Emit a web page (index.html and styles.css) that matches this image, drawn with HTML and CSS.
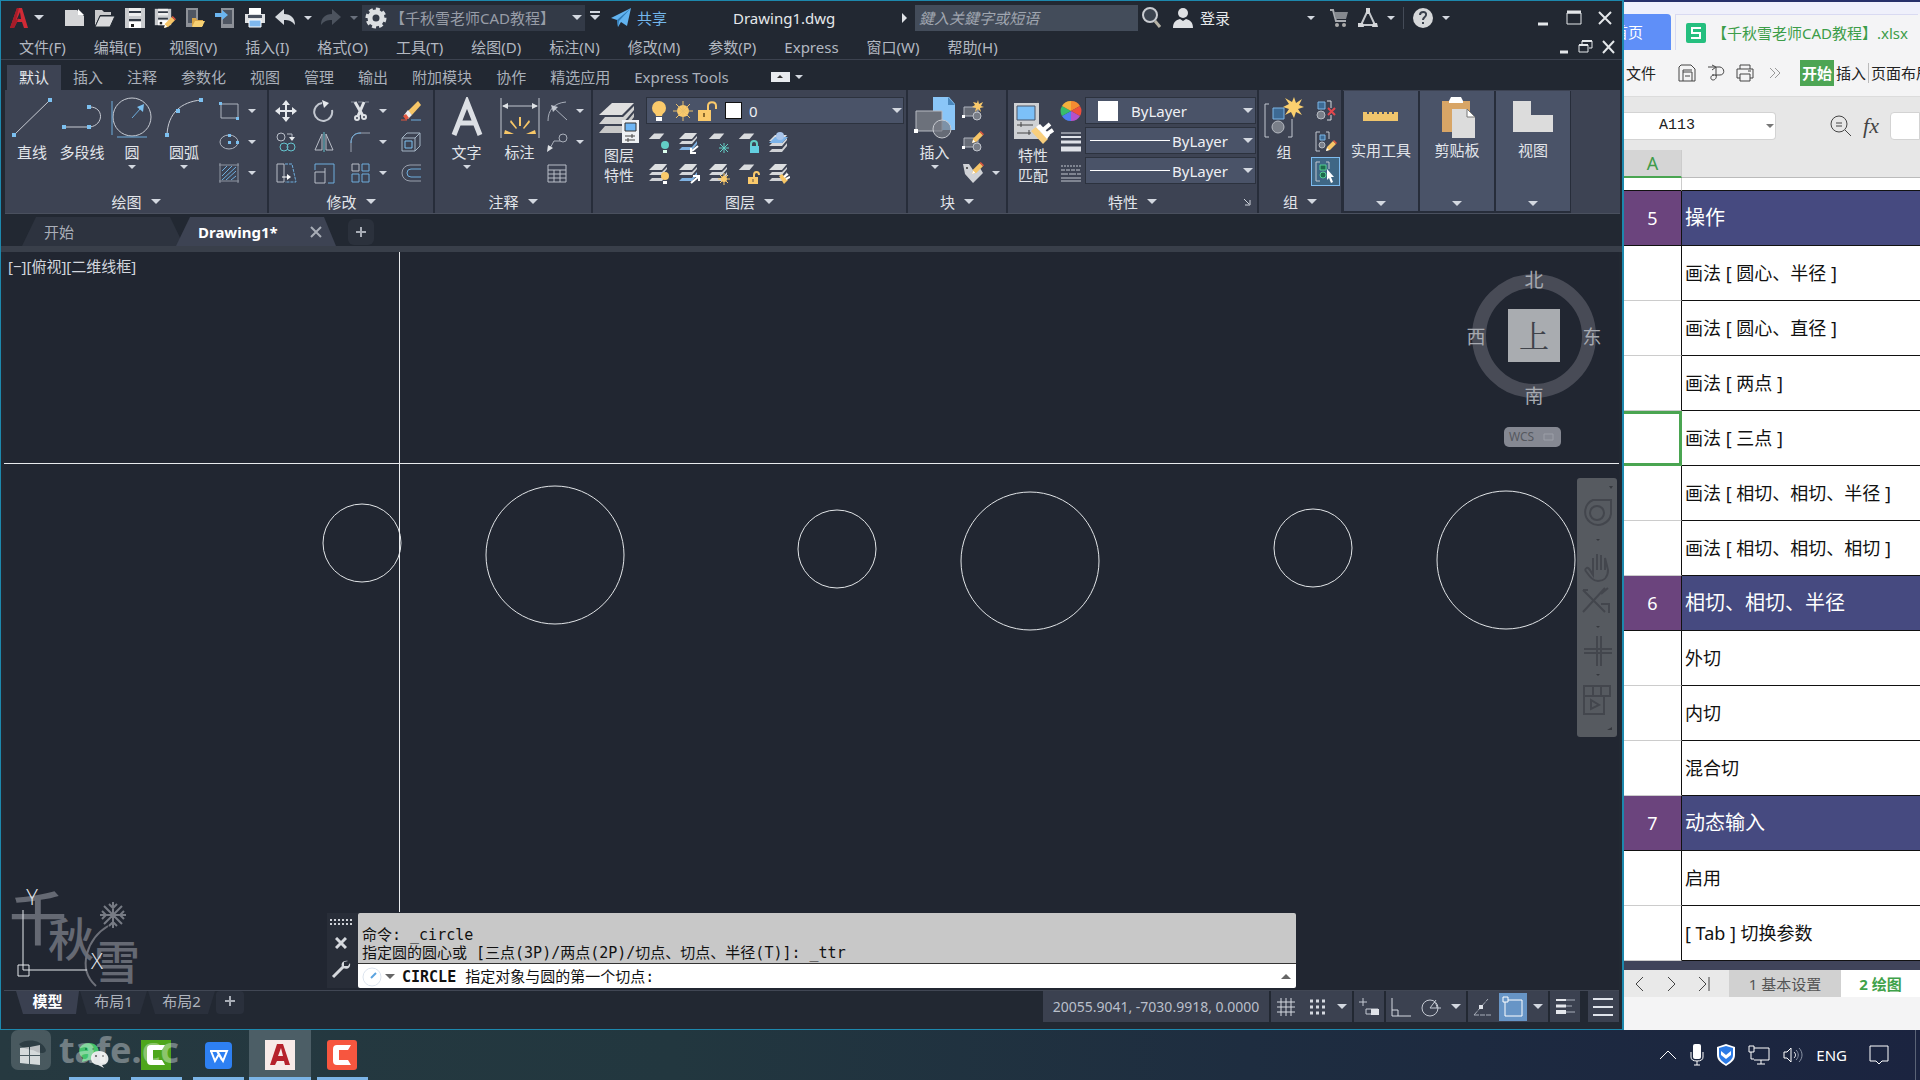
FILE: index.html
```html
<!DOCTYPE html>
<html lang="zh-CN">
<head>
<meta charset="utf-8">
<meta name="viewport" content="width=device-width, initial-scale=1">
<title>Drawing1.dwg</title>
<link rel="stylesheet" href="styles.css">
</head>
<body>
<svg class="defs" aria-hidden="true">
  <symbol id="sheet" viewBox="0 0 22 22"><path d="M8 2h13l-6 7H1z" fill="#d9dbde"/></symbol>
  <symbol id="sheets" viewBox="0 0 22 22"><path d="M7 1h12l-5 6H1z" fill="#dcdee0"/><path d="M1 12l3-3h10l5-5v2l-5 6z" fill="#d5d7da"/><path d="M1 18l3-3h10l5-6v3l-5 6z" fill="#cfd1d5"/></symbol>
  <symbol id="sheetsblue" viewBox="0 0 22 22"><path d="M7 1h12l-5 6H1z" fill="#dcdee0"/><path d="M1 12l3-3h10l5-5v2l-5 6z" fill="#d5d7da"/><path d="M1 18l3-3h10l5-6v3l-5 6z" fill="#7fb2e2"/></symbol>
  <symbol id="paper" viewBox="0 0 22 22"><path d="M1 3h12l7 6v10H1z" fill="#d5d6d8"/><path d="M14 2l6 6h-6z" fill="#fff"/></symbol>
  <symbol id="floppy" viewBox="0 0 22 22"><path d="M1 1h20v20H1z" fill="#c9cbce"/><path d="M5 1h12v8H5z" fill="#efefef"/><path d="M5 5h12M5 13h12" stroke="#333a45" stroke-width="2"/><path d="M5 15h12v6H5z" fill="#fff"/><path d="M7 17h3v3H7z" fill="#222"/></symbol>
  <symbol id="block" viewBox="0 0 22 22"><path d="M2 7h14v9H2z" fill="#666b76" stroke="#aeb3bd"/><circle cx="15" cy="16" r="4" fill="#777c86" stroke="#c0c4cc"/><path d="M0 15h3v3H0z" fill="#fff"/></symbol>
  <symbol id="pencil" viewBox="0 0 12 12"><path d="M1 11l1-4 6-6 3 3-6 6z" fill="#f7c667"/><path d="M8 1l1-1 3 3-1 1z" fill="#e4573f"/><path d="M1 11l1-3 2 2z" fill="#fff"/></symbol>
</svg>
<div class="desktop">
<main class="cad">
  <header class="titlebar">
    <button class="ico logo" aria-label="应用程序"><svg width="20" height="22" viewBox="0 0 20 22"><path d="M1 21L8 1h5l6 20h-4l-2-6H8l-3 6zM8 12h4l-1-7z" fill="#d02a35"/><path d="M1 21L8 1h2L7 13l3-2-5 10z" fill="#a51c29"/></svg></button>
    <i class="caret wide"></i>
    <div class="quick">
      <button class="ico" aria-label="新建"><svg width="22" height="22"><use href="#paper"/></svg></button>
      <button class="ico" aria-label="打开"><svg width="22" height="22" viewBox="0 0 22 22"><path d="M1 19V3h7l2 2h7v3H6z" fill="#c9cacc"/><path d="M6 9h15l-5 11H1z" fill="#d9dadc" stroke="#222a33"/></svg></button>
      <button class="ico" aria-label="保存"><svg width="22" height="22"><use href="#floppy"/></svg></button>
      <button class="ico" aria-label="另存为"><svg width="22" height="22"><use href="#floppy" width="18" height="20"/><use href="#pencil" x="9" y="9" width="13" height="13"/></svg></button>
      <button class="ico" aria-label="从移动端打开"><svg width="22" height="22" viewBox="0 0 22 22"><path d="M2 1h12v19H2z" fill="#8d9198"/><path d="M4 3h8v13H4z" fill="#4f5662"/><path d="M8 19v-8h4l1 2h6v6z" fill="#d9a648"/><path d="M11 14h10l-3 6H8z" fill="#f7d173"/></svg></button>
      <button class="ico" aria-label="保存到移动端"><svg width="22" height="22" viewBox="0 0 22 22"><path d="M7 1h13v20H7z" fill="#8d9198"/><path d="M9 3h9v14H9z" fill="#4f5662"/><path d="M1 6h7V3l6 5-6 5v-3H1z" fill="#6bb5f0"/></svg></button>
      <button class="ico" aria-label="打印"><svg width="22" height="22" viewBox="0 0 22 22"><path d="M5 1h12v6H5z" fill="#fff"/><path d="M1 7h20v9H1z" fill="#dfe1e3"/><path d="M4 8h14v3H4z" fill="#49515e"/><path d="M5 13h12v7H5z" fill="#7fb8ee" stroke="#fff"/></svg></button>
      <button class="ico" aria-label="放弃"><svg width="22" height="22" viewBox="0 0 22 22"><path d="M1 10l9-8v5c7 0 11 4 11 11-3-4-6-5-11-5v5z" fill="#d6dadf"/></svg></button>
      <i class="caret"></i>
      <button class="ico" aria-label="重做"><svg width="22" height="22" viewBox="0 0 22 22"><path d="M21 10l-9-8v5C5 7 1 11 1 18c3-4 6-5 11-5v5z" fill="#4c535e"/></svg></button>
      <i class="caret dim"></i>
    </div>
    <label class="workspace">
      <svg width="22" height="22" viewBox="0 0 22 22"><circle cx="11" cy="11" r="6" fill="none" stroke="#dcdfe2" stroke-width="5"/><circle cx="11" cy="11" r="9" fill="none" stroke="#dcdfe2" stroke-width="3" stroke-dasharray="4 3"/></svg>
      <select aria-label="工作空间"><option>【千秋雪老师CAD教程】</option></select>
      <i class="caret wide"></i>
    </label>
    <i class="caret wide bar"></i>
    <button class="share"><svg width="22" height="22" viewBox="0 0 22 22"><path d="M1 11L21 1l-4 18-6-4-3 5-1-7z" fill="#62b3ef"/><path d="M7 13L21 1 9 14l-1 6z" fill="#2e79b5"/></svg>共享</button>
    <h1>Drawing1.dwg</h1>
    <i class="play"></i>
    <input class="search" type="text" aria-label="搜索" placeholder="鍵入关鍵字或短语">
    <button class="ico" aria-label="查找"><svg width="20" height="22" viewBox="0 0 20 22"><circle cx="8" cy="8" r="7" fill="#3b434f" stroke="#c9ccd1" stroke-width="2"/><path d="M13 14l5 6" stroke="#b7b3a6" stroke-width="3"/></svg></button>
    <button class="login"><svg width="22" height="22" viewBox="0 0 22 22"><circle cx="11" cy="6" r="5" fill="#dfe1e4"/><path d="M1 21c0-6 3-8 7-9l3 2 3-2c4 1 7 3 7 9z" fill="#dfe1e4"/></svg>登录</button>
    <div class="apps">
      <i class="caret first"></i>
      <button class="ico" aria-label="应用商店"><svg width="20" height="20" viewBox="0 0 20 20"><path d="M1 2h3l3 11h10" fill="none" stroke="#a9acb1" stroke-width="2"/><path d="M5 4h14l-2 7H7z" fill="#85898f"/><circle cx="8" cy="17" r="2" fill="#aaa"/><circle cx="15" cy="17" r="2" fill="#aaa"/></svg></button>
      <button class="ico" aria-label="Autodesk"><svg width="22" height="22" viewBox="0 0 22 22"><path d="M11 3L4 18h14z" fill="none" stroke="#c5c8cc" stroke-width="2"/><path d="M9 1h4v5l-1 1h-2L9 6zM1 16h5l1 4H1zM16 16h4l1 4h-6z" fill="#d5d7da"/></svg></button>
      <i class="caret"></i>
      <span class="rule"></span>
      <button class="ico" aria-label="帮助"><svg width="22" height="22" viewBox="0 0 22 22"><circle cx="11" cy="11" r="10" fill="#d6d8da"/><path d="M8 8c0-4 7-4 6 0 0 2-3 2-3 5M11 15v2" fill="none" stroke="#39404c" stroke-width="2"/></svg></button>
      <i class="caret"></i>
    </div>
    <div class="winbtns">
      <button aria-label="最小化"><svg width="14" height="16" viewBox="0 0 14 16"><path d="M2 14h10" stroke="#e4e7ea" stroke-width="3"/></svg></button>
      <button aria-label="最大化"><svg width="16" height="16" viewBox="0 0 16 16"><path d="M1 3h14v11H1z" fill="none" stroke="#e4e7ea"/><path d="M1 2h14" stroke="#e4e7ea" stroke-width="3"/></svg></button>
      <button aria-label="关闭"><svg width="14" height="16" viewBox="0 0 14 16"><path d="M1 2l12 12M13 2L1 14" stroke="#e4e7ea" stroke-width="2"/></svg></button>
    </div>
  </header>
  <nav class="menubar">
    <button>文件(F)</button><button>编辑(E)</button><button>视图(V)</button><button>插入(I)</button><button>格式(O)</button><button>工具(T)</button><button>绘图(D)</button><button>标注(N)</button><button>修改(M)</button><button>参数(P)</button><button>Express</button><button>窗口(W)</button><button>帮助(H)</button>
    <div class="docbtns">
      <button aria-label="最小化图形"><svg width="10" height="14" viewBox="0 0 10 14"><path d="M1 12h8" stroke="#e4e7ea" stroke-width="3"/></svg></button>
      <button aria-label="还原图形"><svg width="15" height="15" viewBox="0 0 15 15"><path d="M4 5V2h10v7h-3M1 6h9v7H1z" fill="none" stroke="#e4e7ea"/><path d="M4 2h10M1 6h9" stroke="#e4e7ea" stroke-width="2"/></svg></button>
      <button aria-label="关闭图形"><svg width="13" height="14" viewBox="0 0 13 14"><path d="M1 1l11 12M12 1L1 13" stroke="#e4e7ea" stroke-width="2"/></svg></button>
    </div>
  </nav>
  <nav class="ribtabs">
    <button class="on">默认</button><button>插入</button><button>注释</button><button>参数化</button><button>视图</button><button>管理</button><button>输出</button><button>附加模块</button><button>协作</button><button>精选应用</button><button>Express Tools</button>
    <button class="collapse" aria-label="最小化功能区"><svg width="19" height="10" viewBox="0 0 19 10"><path d="M0 0h19v10H0z" fill="#e8ebef"/><path d="M6 6l3-3 3 3z" fill="#333"/></svg><i class="caret"></i></button>
  </nav>
  <section class="ribbon">
    <div class="panel p-draw">
      <div class="body">
        <button class="big"><svg width="42" height="42" viewBox="0 0 42 42"><path d="M3 38L39 3" stroke="#c8ccd4"/><path d="M1 36h4v4H1zM37 1h4v4h-4z" fill="#7cc0f0"/></svg>直线</button>
        <button class="big"><svg width="42" height="42" viewBox="0 0 42 42"><path d="M3 30h26c14-2 14-20 0-20" fill="none" stroke="#c8ccd4"/><path d="M1 28h4v4H1zM26 28h4v4h-4zM26 8h4v4h-4z" fill="#7cc0f0"/></svg>多段线</button>
        <button class="big"><svg width="42" height="42" viewBox="0 0 42 42"><circle cx="21" cy="20" r="19" fill="none" stroke="#c8ccd4"/><path d="M1 4v34M6 40h30M21 21l9-10" stroke="#6eaede"/><path d="M33 7l-1 8-6-5z" fill="#7cc0f0"/></svg>圆<i class="caret"></i></button>
        <button class="big arc"><svg width="42" height="42" viewBox="0 0 42 42"><path d="M4 38C5 16 18 5 38 3" fill="none" stroke="#c8ccd4"/><path d="M2 36h4v4H2zM13 12h4v4h-4zM36 1h4v4h-4z" fill="#7cc0f0"/></svg>圆弧<i class="caret"></i></button>
        <div class="col">
          <button class="sm" aria-label="矩形"><svg width="22" height="22" viewBox="0 0 22 22"><path d="M3 4h17v14H3z" fill="none" stroke="#aeb4bf"/><path d="M1 2h3v3H1zM18 17h3v3h-3z" fill="#7cc0f0"/></svg><i class="caret"></i></button>
          <button class="sm" aria-label="椭圆"><svg width="22" height="22" viewBox="0 0 22 22"><ellipse cx="11" cy="11" rx="9" ry="7" fill="none" stroke="#aeb4bf"/><path d="M10 3h3v3h-3zM10 10h3v3h-3zM18 10h3v3h-3z" fill="#7cc0f0"/></svg><i class="caret"></i></button>
          <button class="sm" aria-label="图案填充"><svg width="22" height="22" viewBox="0 0 22 22"><path d="M2 1v20M20 1v20M1 3h20M1 19h20" stroke="#8f96a3"/><path d="M4 9l5-5M4 14L14 4M4 18L18 5M8 18l10-9M13 18l5-4" stroke="#6eaede"/></svg><i class="caret"></i></button>
        </div>
      </div>
      <button class="title">绘图<i class="caret wide"></i></button>
    </div>
    <div class="panel p-modify">
      <div class="body">
        <button class="sm" aria-label="移动"><svg width="22" height="22" viewBox="0 0 22 22"><path d="M11 3v16M3 11h16" stroke="#e6e9ed" stroke-width="2"/><path d="M7 5l4-5 4 5zM7 17l4 5 4-5zM5 7l-5 4 5 4zM17 7l5 4-5 4z" fill="#e6e9ed"/></svg></button>
        <button class="sm" aria-label="旋转"><svg width="22" height="22" viewBox="0 0 22 22"><path d="M9 3a9 9 0 1 0 10 7" fill="none" stroke="#c2c7d0" stroke-width="2"/><path d="M9 0l7 3-5 5z" fill="#e6e9ed"/></svg></button>
        <button class="sm" aria-label="修剪"><svg width="22" height="22" viewBox="0 0 22 22"><path d="M2 2h18" stroke="#858c99" stroke-dasharray="4 3"/><path d="M6 2l8 14M15 2L9 16" stroke="#dfe2e6" stroke-width="3"/><circle cx="8" cy="18" r="2" fill="none" stroke="#dfe2e6" stroke-width="2"/><circle cx="15" cy="17" r="2" fill="none" stroke="#dfe2e6" stroke-width="2"/></svg><i class="caret"></i></button>
        <button class="sm" aria-label="删除"><svg width="22" height="22" viewBox="0 0 22 22"><path d="M8 11L18 1l3 4-9 10z" fill="#f7c667"/><path d="M4 15l4-5 4 5-4 4z" fill="#f1efed"/><path d="M3 16l3-2 3 4-3 2z" fill="#e4573f"/><path d="M1 20h6" stroke="#e4573f"/><path d="M11 20h10" stroke="#6eaede"/></svg></button>
        <button class="sm" aria-label="复制"><svg width="22" height="22" viewBox="0 0 22 22"><g fill="none" stroke="#b9bec8"><circle cx="6" cy="6" r="4"/><path d="M12 3h5v5"/></g><path d="M14 6l3 4 3-4z" fill="#e6e9ed"/><g fill="none" stroke="#65c4cf"><circle cx="9" cy="16" r="4"/><circle cx="16" cy="16" r="4"/></g></svg></button>
        <button class="sm" aria-label="镜像"><svg width="22" height="22" viewBox="0 0 22 22"><path d="M9 3v16H2zM13 3v16h7z" fill="none" stroke="#b9bec8"/><path d="M11 1v20" stroke="#65c4cf"/></svg></button>
        <button class="sm" aria-label="圆角"><svg width="22" height="22" viewBox="0 0 22 22"><path d="M2 21V12C2 5 6 2 11 2h10" fill="none" stroke="#9aa1ae"/><path d="M2 12C2 5 6 2 12 2" fill="none" stroke="#6eaede"/></svg><i class="caret"></i></button>
        <button class="sm" aria-label="分解"><svg width="22" height="22" viewBox="0 0 22 22"><path d="M2 7l5-5h13v13l-5 5H2zM2 7h13v13M15 7l5-5" fill="none" stroke="#a4b4c4"/><path d="M5 10h7v7H5z" fill="none" stroke="#7cc0f0"/></svg></button>
        <button class="sm" aria-label="拉伸"><svg width="22" height="22" viewBox="0 0 22 22"><path d="M2 2h7v18H2z" fill="none" stroke="#b9bec8"/><path d="M10 2h7l4 18H10" fill="none" stroke="#6eaede" stroke-dasharray="3 1"/><path d="M7 15h6" stroke="#fff"/><path d="M12 12l4 3-4 3z" fill="#fff"/></svg></button>
        <button class="sm" aria-label="缩放"><svg width="22" height="22" viewBox="0 0 22 22"><path d="M2 8V2h19v19h-6" fill="none" stroke="#6eaede"/><path d="M2 10h10v11H2zM12 10V6" fill="none" stroke="#b9bec8"/></svg></button>
        <button class="sm" aria-label="阵列"><svg width="22" height="22" viewBox="0 0 22 22"><g fill="none" stroke="#6eaede"><path d="M3 12h7v8H3zM13 12h7v8h-7zM13 2h7v7h-7z"/></g><path d="M3 2h7v7H3z" fill="none" stroke="#b9bec8"/></svg><i class="caret"></i></button>
        <button class="sm" aria-label="偏移"><svg width="22" height="22" viewBox="0 0 22 22"><path d="M21 3H10a8 8 0 0 0 0 16h11" fill="none" stroke="#9aa1ae"/><path d="M21 7H11a4 4 0 0 0 0 8h10" fill="none" stroke="#6eaede"/></svg></button>
      </div>
      <button class="title">修改<i class="caret wide"></i></button>
    </div>
    <div class="panel p-note">
      <div class="body">
        <button class="big"><svg width="42" height="42" viewBox="0 0 42 42"><path d="M8 38L21 5l13 33M13 26h16" fill="none" stroke="#dcdfe4" stroke-width="5"/></svg>文字<i class="caret"></i></button>
        <button class="big"><svg width="42" height="42" viewBox="0 0 42 42"><path d="M2 1v40M40 1v40M4 9h34" stroke="#c2c7d0"/><path d="M3 9l6-3v6zM39 9l-6-3v6z" fill="#dfe2e6"/><path d="M20 20h2v9h-2zM12 23l6 8-1 1-6-7zM30 23l-6 8 1 1 6-7zM6 33l9 4H5zM36 33l-9 4h10z" fill="#f7c667"/></svg>标注</button>
        <div class="col">
          <button class="sm" aria-label="半径标注"><svg width="22" height="22" viewBox="0 0 22 22"><path d="M2 21C2 10 8 3 20 2M7 7l14 13" fill="none" stroke="#a9afba"/><path d="M5 5l7 2-5 5z" fill="#c2c7d0"/></svg><i class="caret"></i></button>
          <button class="sm" aria-label="引线"><svg width="22" height="22" viewBox="0 0 22 22"><path d="M3 19l5-9h6" fill="none" stroke="#a9afba"/><circle cx="17" cy="7" r="4" fill="none" stroke="#a9afba"/><path d="M1 21l1-7 5 3z" fill="#dfe2e6"/></svg><i class="caret"></i></button>
          <button class="sm" aria-label="表格"><svg width="22" height="22" viewBox="0 0 22 22"><path d="M2 3h18v17H2zM2 8h18M2 12h18M2 16h18M8 8v12M14 8v12" fill="none" stroke="#b9bec8"/></svg></button>
        </div>
      </div>
      <button class="title">注释<i class="caret wide"></i></button>
    </div>
    <div class="panel p-layer">
      <div class="body">
        <button class="big two"><svg width="42" height="42" viewBox="0 0 42 42"><path d="M14 1h22L24 13H1z" fill="#e0e0e0"/><path d="M1 22l6-7h18L36 4v4L24 22z" fill="#d2d2d2"/><path d="M1 31l6-7h18l11-13v4L24 31z" fill="#c8c8c8"/><path d="M24 18h17v23H24z" fill="#eef1f4"/><path d="M27 21h11v8H27z" fill="#6eb6f4" stroke="#333" stroke-width="1"/><path d="M27 34h10M27 38h10M34 32v4M30 36v4" stroke="#444"/></svg>图层<br>特性</button>
        <div class="stack">
          <label class="combo">
            <svg width="22" height="22" viewBox="0 0 22 22"><circle cx="11" cy="8" r="7" fill="#fbca6b"/><path d="M7 13h8l-1 3H8z" fill="#fbca6b"/><path d="M8 17h6v4H8z" fill="#fff"/></svg>
            <svg width="22" height="22" viewBox="0 0 22 22"><circle cx="11" cy="11" r="6" fill="#fbca6b"/><path d="M11 1v20M1 11h20M4 4l14 14M18 4L4 18" stroke="#e9c06d"/></svg>
            <svg width="22" height="22" viewBox="0 0 22 22"><path d="M2 10h13v11H2z" fill="#fbca6b"/><path d="M12 10V6c0-5 8-5 8 0v3" fill="none" stroke="#fbca6b" stroke-width="2"/><path d="M8 13v4" stroke="#8a6a2e" stroke-width="2"/></svg>
            <span class="swatch"></span>
            <select aria-label="图层"><option>0</option></select><i class="caret wide"></i>
          </label>
          <div class="tools">
            <button class="sm" aria-label="关"><svg width="22" height="22"><use href="#sheet" width="17" height="17"/><circle cx="17" cy="13" r="4" fill="#63cfc6"/><path d="M15 18h4v3h-4z" fill="#dfe"/></svg></button>
            <button class="sm" aria-label="隔离"><svg width="22" height="22"><use href="#sheetsblue"/><path d="M20 14l-6 5M13 16v5h5" stroke="#fff" stroke-width="2" fill="none"/></svg></button>
            <button class="sm" aria-label="冻结"><svg width="22" height="22"><use href="#sheet" width="17" height="17"/><path d="M16 11v10M11 16h10M12 12l8 8M20 12l-8 8" stroke="#63cfc6"/></svg></button>
            <button class="sm" aria-label="锁定"><svg width="22" height="22"><use href="#sheet" width="17" height="17"/><path d="M13 14v-2c0-4 6-4 6 0v2" fill="none" stroke="#63cfc6" stroke-width="2"/><path d="M12 14h9v7h-9z" fill="#63cfe0"/></svg></button>
            <button class="sm" aria-label="置为当前"><svg width="22" height="22"><use href="#sheets" y="2"/><path d="M1 11l6-6h13l-6 6z" fill="#7db4ea"/><circle cx="12" cy="4" r="4" fill="#a9c5ea"/></svg></button>
            <button class="sm" aria-label="打开所有图层"><svg width="22" height="22"><use href="#sheets"/><circle cx="17" cy="13" r="4" fill="#fbca6b"/><path d="M15 18h4v3h-4z" fill="#fff"/></svg></button>
            <button class="sm" aria-label="取消隔离"><svg width="22" height="22"><use href="#sheetsblue"/><path d="M13 20l7-6M15 13h6v5" stroke="#fff" stroke-width="2" fill="none"/></svg></button>
            <button class="sm" aria-label="解冻"><svg width="22" height="22"><use href="#sheets"/><circle cx="16" cy="16" r="3" fill="#fbca6b"/><path d="M16 10v12M10 16h12M12 12l8 8M20 12l-8 8" stroke="#fbca6b"/></svg></button>
            <button class="sm" aria-label="解锁"><svg width="22" height="22"><use href="#sheet" width="17" height="17"/><path d="M16 14v-2c0-4 5-4 5 0" fill="none" stroke="#fbca6b" stroke-width="2"/><path d="M10 14h10v7H10z" fill="#fbca6b"/><path d="M15 16v3" stroke="#654"/></svg></button>
            <button class="sm" aria-label="匹配图层"><svg width="22" height="22"><use href="#sheets"/><path d="M11 13l3-2 6 6-4 4z" fill="#f7c667"/><path d="M16 14l4-3M18 16l4-2" stroke="#fff" stroke-width="2"/></svg></button>
          </div>
        </div>
      </div>
      <button class="title">图层<i class="caret wide"></i></button>
    </div>
    <div class="panel p-block">
      <div class="body">
        <button class="big"><svg width="42" height="42" viewBox="0 0 42 42"><path d="M19 0h16l6 7v26H19z" fill="#8ac6f8"/><path d="M34 0l7 8h-7z" fill="#4a88bd"/><path d="M2 14h26v20H2z" fill="#6c717b" stroke="#b6bac2"/><circle cx="28" cy="32" r="9" fill="#777c86" fill-opacity=".7" stroke="#c6c9cf"/><path d="M0 32h4v4H0z" fill="#fff"/></svg>插入<i class="caret"></i></button>
        <div class="col">
          <button class="sm" aria-label="创建块"><svg width="22" height="22"><use href="#block"/><path d="M16 0l1 4 4-2-2 4 3 1-4 1 1 4-3-3-3 3 1-4-4-1 3-2-2-3 4 1z" fill="#fbca6b"/></svg></button>
          <button class="sm" aria-label="编辑块"><svg width="22" height="22"><use href="#block"/><use href="#pencil" x="9" y="0" width="13" height="13"/></svg></button>
          <button class="sm" aria-label="编辑属性"><svg width="22" height="22"><path d="M1 2h6l4 6 7-2 3 5-10 10L3 12z" fill="#d0d2d6"/><circle cx="5" cy="6" r="1" fill="#333"/><use href="#pencil" x="9" y="0" width="13" height="13"/></svg><i class="caret"></i></button>
        </div>
      </div>
      <button class="title">块<i class="caret wide"></i></button>
    </div>
    <div class="panel p-prop">
      <div class="body">
        <button class="big two"><svg width="42" height="42" viewBox="0 0 42 42"><path d="M2 1h25v36H2z" fill="#cfd1d4"/><path d="M5 4h18v14H5z" fill="#7cc0f8" stroke="#4a5566"/><path d="M5 23h16M5 31h14M9 20v5M17 28v5" stroke="#444"/><path d="M19 29l5-4 12 12-5 5z" fill="#f9cf7d"/><path d="M24 25l4-3 10 11-3 4z" fill="#fff"/><path d="M31 28l7-6M35 32l6-4" stroke="#fff" stroke-width="4"/></svg>特性<br>匹配</button>
        <div class="col">
          <button class="sm wheel" aria-label="对象颜色"><svg width="22" height="22" viewBox="0 0 22 22"><g transform="translate(11 11)"><path d="M0 0V-10A10 10 0 0 1 9-5z" fill="#f58b31"/><path d="M0 0L9-5A10 10 0 0 1 9 5z" fill="#ef4f3d"/><path d="M0 0L9 5A10 10 0 0 1 0 10z" fill="#b451c9"/><path d="M0 0V10A10 10 0 0 1-9 5z" fill="#4d7ff0"/><path d="M0 0L-9 5A10 10 0 0 1-9-5z" fill="#38bd6b"/><path d="M0 0L-9-5A10 10 0 0 1 0-10z" fill="#f4b13d"/></g></svg></button>
          <button class="sm" aria-label="线宽"><svg width="22" height="22" viewBox="0 0 22 22"><path d="M1 2h20" stroke="#dfe2e8"/><path d="M1 6h20" stroke="#dfe2e8" stroke-width="2"/><path d="M1 11h20" stroke="#dfe2e8" stroke-width="3"/><path d="M1 18h20" stroke="#dfe2e8" stroke-width="5"/></svg></button>
          <button class="sm" aria-label="线型"><svg width="22" height="22" viewBox="0 0 22 22"><path d="M1 4h20" stroke="#c2c7d0" stroke-dasharray="2 1"/><path d="M1 8h20" stroke="#c2c7d0" stroke-dasharray="4 1"/><path d="M1 12h20" stroke="#c2c7d0" stroke-dasharray="7 1"/><path d="M1 16h20M1 19h20" stroke="#c2c7d0"/></svg></button>
        </div>
        <div class="stack tri">
          <label class="combo"><span class="swatch plain"></span><select aria-label="颜色"><option>ByLayer</option></select><i class="caret wide"></i></label>
          <label class="combo"><span class="line"></span><select aria-label="线宽"><option>ByLayer</option></select><i class="caret wide"></i></label>
          <label class="combo"><span class="line"></span><select aria-label="线型"><option>ByLayer</option></select><i class="caret wide"></i></label>
        </div>
      </div>
      <button class="title">特性<i class="caret wide"></i><svg class="launch" width="8" height="8" viewBox="0 0 8 8"><path d="M1 1l5 5M7 2v5H2" fill="none" stroke="#cfd4dc"/></svg></button>
    </div>
    <div class="panel p-group">
      <div class="body">
        <button class="big"><svg width="42" height="42" viewBox="0 0 42 42"><path d="M6 7H2v33h4M25 40h4V22" fill="none" stroke="#c2c7d0"/><path d="M10 11h11v11H10z" fill="#3d6a94" stroke="#7cb6e6"/><circle cx="15" cy="30" r="6" fill="#7a7f89" stroke="#b6bac2"/><path d="M31 0l2 6 6-4-3 6 5 2-6 2 4 6-6-3-2 6-3-6-6 3 4-6-6-2 6-3-4-6 7 4z" fill="#fbd06f"/></svg>组</button>
        <div class="col">
          <button class="sm" aria-label="解除编组"><svg width="22" height="22"><path d="M3 2h7v7H3z" fill="#3d6a94" stroke="#7cb6e6"/><circle cx="6" cy="15" r="4" fill="#7a7f89" stroke="#b6bac2"/><path d="M12 1h4v7M16 15v5h-4" fill="none" stroke="#d6d9de"/><path d="M13 8l7 7M20 8l-7 7" stroke="#e2474d" stroke-width="2"/></svg></button>
          <button class="sm" aria-label="组编辑"><svg width="22" height="22"><path d="M5 1H1v19h4M11 1h3v7" fill="none" stroke="#c2c7d0"/><path d="M5 4h5v5H5z" fill="#3d6a94" stroke="#7cb6e6"/><circle cx="7" cy="14" r="3" fill="#7a7f89" stroke="#b6bac2"/><use href="#pencil" x="10" y="9" width="12" height="12"/></svg></button>
          <button class="sm pressed" aria-label="组选择"><svg width="22" height="22"><path d="M5 1H1v19h4M11 1h3v7" fill="none" stroke="#c2c7d0"/><path d="M5 4h6v5H5z" fill="#1e6a4c" stroke="#54cf93"/><circle cx="8" cy="14" r="3" fill="#1e6a4c" stroke="#54cf93"/><path d="M12 8l7 8h-3l2 5-2 1-2-5-2 2z" fill="#fff"/></svg></button>
        </div>
      </div>
      <button class="title">组<i class="caret wide"></i></button>
    </div>
    <button class="slab"><svg width="42" height="42" viewBox="0 0 42 42"><path d="M3 15h4v2h2v-2h3v2h2v-2h3v2h2v-2h3v2h2v-2h3v2h2v-2h3v2h2v-2h4v9H3z" fill="#f0c56c"/></svg>实用工具<i class="caret wide"></i></button>
    <button class="slab"><svg width="42" height="42" viewBox="0 0 42 42"><path d="M6 4h28v31H6z" fill="#d8a566"/><path d="M13 4l2-4h10l2 4v2H13z" fill="#fff"/><path d="M16 12h15l8 8v21H16z" fill="#dcdcdc"/><path d="M31 12l8 8h-8z" fill="#fff" stroke="#777"/></svg>剪贴板<i class="caret wide"></i></button>
    <button class="slab"><svg width="42" height="42" viewBox="0 0 42 42"><path d="M1 4h18v14h22v17H1z" fill="#dcdcdc"/></svg>视图<i class="caret wide"></i></button>
  </section>
  <nav class="doctabs">
    <button class="dt">开始</button>
    <button class="dt on">Drawing1*<svg width="12" height="12" viewBox="0 0 12 12"><path d="M1 1l10 10M11 1L1 11" stroke="#a8adb6" stroke-width="2"/></svg></button>
    <button class="add" aria-label="新图形"><svg width="12" height="12" viewBox="0 0 12 12"><path d="M6 1v10M1 6h10" stroke="#a8adb6" stroke-width="2"/></svg></button>
  </nav>
  <section class="canvas">
    <svg class="model" aria-hidden="true"><g fill="none" stroke="#e2e5e8"><circle cx="358" cy="291" r="39"/><circle cx="551" cy="303" r="69"/><circle cx="833" cy="297" r="39"/><circle cx="1026" cy="309" r="69"/><circle cx="1309" cy="296" r="39"/><circle cx="1502" cy="308" r="69"/></g></svg>
    <i class="cross-h"></i><i class="cross-v"></i>
    <p class="vplabel">[−][俯视][二维线框]</p>
    <svg class="cube" width="156" height="180" viewBox="-12 0 156 180">
      <circle cx="66" cy="69" r="55" fill="none" stroke="#484b56" stroke-width="14"/>
      <path d="M40 42h52v53H40z" fill="#a9acb0"/>
      <g text-anchor="middle" fill="#a6a9b0" font-size="19"><text x="66" y="20">北</text><text x="66" y="136">南</text><text x="8" y="77">西</text><text x="124" y="77">东</text></g>
      <text x="66" y="80" text-anchor="middle" font-size="30" class="top">上</text>
      <rect x="36" y="160" width="57" height="20" rx="5" fill="#858892"/>
      <text x="41" y="174" font-size="12" class="wcs">WCS</text><path d="M76 167h9v6h-9z" fill="none" stroke="#9b9ea7"/>
    </svg>
    <svg class="navbar" width="40" height="259" viewBox="0 0 40 259"><rect width="40" height="259" rx="3" fill="#565a60"/><g fill="none" stroke="#43464d" stroke-width="2"><path d="M34 22H16a13 13 0 1 0 18 14V22z"/><circle cx="20" cy="35" r="7"/><path d="M8 92c3-6 6 2 8 5V80M20 92V76M24 92V77M28 92V80l3 12c0 8-5 11-10 11s-8-4-13-11M6 112l22 22M28 110L6 134M6 112h5M24 116l7-6M24 126h8v9M20 158v30M24 158v30M7 171h28M7 175h28M7 208h26v10H7zM7 218v18h20v-18M14 222l8 5-8 4zM16 208v10M24 208v10"/></g><path d="M19 61h4l-2 2zM19 148h4l-2 2zM19 196h4l-2 2zM32 8h4l-2 3zM30 252h5v-3z" fill="#36393f"/></svg>
    <svg class="ucs" width="156" height="120" viewBox="0 -16 156 120">
      <g class="mark"><text x="5" y="54" font-size="58">千</text><text x="44" y="70" font-size="46">秋</text><text x="90" y="93" font-size="46">雪</text></g>
      <path d="M109 16v26M96 29h26M100 20l18 18M118 20l-18 18M105 18l4 4 4-4M105 40l4-4 4 4M98 25l4 4-4 4M120 25l-4 4 4 4" stroke="#777b84" stroke-width="2" fill="none"/>
      <path d="M104 40C84 52 72 82 92 100" fill="none" stroke="#6d7079" stroke-width="2"/>
      <path d="M14 79h11v11H14zM19 84V24M19 84h64" fill="none" stroke="#e6e9ee"/>
      <g class="axis"><text x="28" y="19" text-anchor="middle">Y</text><text x="93" y="83" text-anchor="middle">X</text></g>
    </svg>
    <div class="cmd">
      <div class="grip">
        <svg width="22" height="7" viewBox="0 0 22 7"><path d="M0 1h22M0 5h22" stroke="#cfd2d8" stroke-width="2" stroke-dasharray="2 2"/></svg>
        <button aria-label="关闭命令行"><svg width="12" height="12" viewBox="0 0 12 12"><path d="M1 1l10 10M11 1L1 11" stroke="#d5d8dd" stroke-width="3"/></svg></button>
        <button aria-label="自定义"><svg width="20" height="20" viewBox="0 0 20 20"><path d="M2 18L12 8" stroke="#d5d8dd" stroke-width="3"/><path d="M17 2l-4 1 0 4 4 0 2-3c1 5-3 7-7 5-3-3-1-8 5-7z" fill="#d5d8dd"/></svg></button>
      </div>
      <div class="cmdbox">
        <div class="hist"><p>命令: _circle</p><p>指定圆的圆心或 [三点(3P)/两点(2P)/切点、切点、半径(T)]: _ttr</p></div>
        <div class="prompt"><svg width="20" height="20" viewBox="0 0 20 20"><circle cx="10" cy="10" r="9" fill="none" stroke="#dce4ee"/><path d="M9 11l5-5" stroke="#5aa3e0" stroke-width="2"/></svg><i class="caret wide"></i><label for="cmdin"><b>CIRCLE</b> 指定对象与圆的第一个切点:</label><input id="cmdin" type="text"><i class="caret up"></i></div>
      </div>
    </div>
  </section>
  <footer class="status">
    <nav class="layouts"><button class="on">模型</button><button>布局1</button><button>布局2</button><button class="plus" aria-label="新建布局"><svg width="10" height="10" viewBox="0 0 10 10"><path d="M5 0v10M0 5h10" stroke="#a8adb6" stroke-width="2"/></svg></button></nav>
    <div class="toggles">
      <button class="coords">20055.9041, -7030.9918, 0.0000</button>
      <div class="set"><button aria-label="栅格"><svg width="20" height="20" viewBox="0 0 20 20"><path d="M5 1v18M10 1v18M15 1v18M1 5h18M1 10h18M1 15h18" stroke="#d5d9e0"/></svg></button><button aria-label="捕捉"><svg width="20" height="20" viewBox="0 0 20 20"><path d="M3 4h15M3 10h15M3 16h15" stroke="#d5d9e0" stroke-width="3" stroke-dasharray="3 3"/></svg></button><i class="caret wide"></i></div>
      <div class="set one"><button aria-label="动态输入"><svg width="20" height="20" viewBox="0 0 20 20"><path d="M4 1v8M0 5h8M7 12h12v5H7z" fill="none" stroke="#c5cad3"/><path d="M12 12h8v6h-8z" fill="#dfe2e8"/></svg></button></div>
      <div class="set pad"><button aria-label="正交"><svg width="20" height="20" viewBox="0 0 20 20"><path d="M1 1v18h19M1 13h6v6" fill="none" stroke="#d5d9e0"/></svg></button><button aria-label="极轴"><svg width="20" height="20" viewBox="0 0 20 20"><circle cx="9" cy="11" r="8" fill="none" stroke="#c5cad3"/><path d="M9 11l6-8M9 11h11M13 5c2 2 3 3 3 6" fill="none" stroke="#c5cad3"/></svg></button><i class="caret wide"></i></div>
      <div class="set pad"><button aria-label="对象捕捉追踪"><svg width="20" height="20" viewBox="0 0 20 20"><path d="M1 18L15 2M1 18h18" stroke="#a8aeb9" stroke-dasharray="5 1"/><path d="M6 8h4v4H6z" fill="#dfe2e8"/></svg></button><button class="lit" aria-label="对象捕捉"><svg width="22" height="22" viewBox="0 0 22 22"><path d="M3 4h17v16H3z" fill="none" stroke="#fff"/><path d="M1 1h5v5H1z" fill="#6795c6" stroke="#fff"/></svg></button><i class="caret wide"></i></div>
      <div class="set one"><button aria-label="线宽显示"><svg width="20" height="20" viewBox="0 0 20 20"><path d="M1 3h10" stroke="#e4e7ec" stroke-width="2"/><path d="M1 9h10" stroke="#e4e7ec" stroke-width="3"/><path d="M1 15h10" stroke="#e4e7ec" stroke-width="4"/><path d="M11 3h9M11 9h6M11 15h9" stroke="#a8aeb9"/></svg></button></div>
      <div class="set one last"><button aria-label="自定义"><svg width="22" height="20" viewBox="0 0 22 20"><path d="M1 2h20M1 10h20M1 18h20" stroke="#dfe3ea" stroke-width="2"/></svg></button></div>
    </div>
  </footer>
</main>
<aside class="sheet">
  <nav class="booktabs"><button class="home">首页</button><button class="book"><svg width="20" height="20" viewBox="0 0 20 20"><rect width="20" height="20" rx="2" fill="#25bf7f"/><path d="M15 5H6v5h8v5H5" fill="none" stroke="#fff" stroke-width="2"/></svg>【千秋雪老师CAD教程】.xlsx</button></nav>
  <div class="wpsbar">
    <button>文件</button><i></i>
    <button aria-label="保存"><svg width="18" height="18" viewBox="0 0 18 18"><path d="M1 3l2-2h10l4 4v12H1zM5 17V8h9v9M5 8V6h9M7 12h5" fill="none" stroke="#444"/></svg></button>
    <button aria-label="输出"><svg width="18" height="18" viewBox="0 0 18 18"><path d="M1 3h7M5 1l4 2-4 3M9 12V3h4c5 1 5 8 0 8H5M9 11c1 3-1 5-3 5-3 0-3-5 1-5" fill="none" stroke="#444"/></svg></button>
    <button aria-label="打印"><svg width="18" height="18" viewBox="0 0 18 18"><path d="M4 5V1h10v4M4 14H1V5h16v9h-3M4 10h10v7H4zM12 7h3" fill="none" stroke="#444"/></svg></button>
    <button class="more" aria-label="更多"><svg width="12" height="12" viewBox="0 0 12 12"><path d="M1 1l5 5-5 5M6 1l5 5-5 5" fill="none" stroke="#999"/></svg></button>
    <i></i>
    <button class="on">开始</button><button class="tight">插入</button><button class="tight edge">页面布局</button>
  </div>
  <div class="formula">
    <label class="namebox"><input type="text" value="A113" aria-label="名称框"><i class="caret"></i></label>
    <button class="ico" aria-label="浏览"><svg width="22" height="22" viewBox="0 0 22 22"><circle cx="9" cy="9" r="8" fill="none" stroke="#444" stroke-width="1"/><path d="M15 15l6 6M6 8h6M6 11h6" stroke="#444" stroke-width="1"/></svg></button>
    <button class="fx">fx</button>
    <input class="fin" type="text" aria-label="编辑栏">
  </div>
  <table>
    <thead><tr class="cols"><th scope="col">A</th><th></th></tr></thead>
    <tbody>
      <tr class="gap"><td></td><td></td></tr>
      <tr class="head"><td>5</td><td>操作</td></tr>
      <tr><td></td><td>画法 [ 圆心、半径 ]</td></tr>
      <tr><td></td><td>画法 [ 圆心、直径 ]</td></tr>
      <tr><td></td><td>画法 [ 两点 ]</td></tr>
      <tr><td class="sel"></td><td>画法 [ 三点 ]</td></tr>
      <tr><td></td><td>画法 [ 相切、相切、半径 ]</td></tr>
      <tr><td></td><td>画法 [ 相切、相切、相切 ]</td></tr>
      <tr class="head"><td>6</td><td>相切、相切、半径</td></tr>
      <tr><td></td><td>外切</td></tr>
      <tr><td></td><td>内切</td></tr>
      <tr><td></td><td>混合切</td></tr>
      <tr class="head"><td>7</td><td>动态输入</td></tr>
      <tr><td></td><td>启用</td></tr>
      <tr><td></td><td>[ Tab ] 切换参数</td></tr>
    </tbody>
  </table>
  <div class="band"></div>
  <nav class="sheettabs">
    <button aria-label="上一张"><svg width="10" height="14" viewBox="0 0 10 14"><path d="M8 0L1 7l7 7" fill="none" stroke="#444"/></svg></button>
    <button aria-label="下一张"><svg width="10" height="14" viewBox="0 0 10 14"><path d="M1 0l7 7-7 7" fill="none" stroke="#444"/></svg></button>
    <button aria-label="最后一张"><svg width="12" height="14" viewBox="0 0 12 14"><path d="M1 0l7 7-7 7M11 0v14" fill="none" stroke="#444"/></svg></button>
    <button class="st">1 基本设置</button><button class="st on">2 绘图</button>
  </nav>
</aside>
</div>
<footer class="taskbar">
  <div class="tafe" aria-hidden="true"><svg width="40" height="40" viewBox="0 0 40 40"><rect width="40" height="40" rx="7" fill="#8a969a"/><path d="M8 14c8-6 22-4 26 4 4 6-6 6-10 3-4-2-12-1-16-7z" fill="#3a464c"/></svg>tafe.cc</div>
  <button class="start" aria-label="开始"><svg width="20" height="20" viewBox="0 0 20 20"><path d="M0 3l9-1v8H0zM10 2l10-2v10H10zM0 11h9v8l-9-1zM10 11h10v9l-10-1z" fill="#fff"/></svg></button>
  <button class="task" aria-label="微信"><svg width="30" height="26" viewBox="0 0 30 26"><path d="M10 1c13 0 13 17 0 17l-7 2 1-4C-3 11 0 1 10 1z" fill="#43c26c"/><circle cx="7" cy="7" r="1" fill="#174"/><circle cx="14" cy="7" r="1" fill="#174"/><path d="M20 9c12 0 12 14 3 14l2 3-6-3c-10-1-9-14 1-14z" fill="#e5e8e9"/><circle cx="17" cy="14" r="1" fill="#555"/><circle cx="24" cy="14" r="1" fill="#555"/></svg></button>
  <button class="task" aria-label="Camtasia"><svg width="30" height="30" viewBox="0 0 30 30"><path d="M0 0h30v30H0z" fill="#4ea61b"/><path d="M24 5H10q-4 0-4 4v12q0 4 4 4h14l-3-5H12V10h9z" fill="#fff"/></svg></button>
  <button class="task" aria-label="WPS"><svg width="27" height="27" viewBox="0 0 27 27"><rect width="27" height="27" rx="4" fill="#2e80f2"/><path d="M5 9h17l-4 10-4-7-4 7-4-10M12 9l5 9" fill="none" stroke="#fff" stroke-width="2"/></svg></button>
  <button class="task active" aria-label="AutoCAD"><svg width="30" height="30" viewBox="0 0 30 30"><path d="M0 0h30v30H0z" fill="#f7eae8"/><path d="M5 25L12 4h6l7 21h-5l-1-4h-7l-2 4zM13 16h5l-2-8z" fill="#b6222c"/></svg></button>
  <button class="task" aria-label="Camtasia 录像机"><svg width="30" height="30" viewBox="0 0 30 30"><rect width="30" height="30" rx="3" fill="#f7563f"/><path d="M24 5H10q-4 0-4 4v12q0 4 4 4h14l-3-5H12V10h9z" fill="#fff"/></svg></button>
  <div class="tray">
    <button aria-label="显示隐藏的图标"><svg width="18" height="20" viewBox="0 0 18 20"><path d="M1 14l8-8 8 8" fill="none" stroke="#fff"/></svg></button>
    <button aria-label="麦克风"><svg width="14" height="22" viewBox="0 0 14 22"><rect x="3" y="0" width="8" height="15" rx="2" fill="#fff"/><path d="M1 8v5q0 4 6 4t6-4V8M7 17v4M4 21h6" fill="none" stroke="#fff"/></svg></button>
    <button aria-label="安全"><svg width="18" height="22" viewBox="0 0 18 22"><path d="M9 0l9 3v8c0 5-4 8-9 11-5-3-9-6-9-11V3z" fill="#fff"/><path d="M9 2l7 2v7c0 4-3 6-7 9-4-3-7-5-7-9V4z" fill="#2c7be6"/><path d="M4 7l5 4 5-4v4l-5 4-5-4z" fill="#fff"/></svg></button>
    <button aria-label="网络"><svg width="22" height="20" viewBox="0 0 22 20"><path d="M6 3h15v12H6M13 15v4M9 19h8M1 1h5v6H1zM3 7v7h3" fill="none" stroke="#fff"/></svg></button>
    <button aria-label="音量"><svg width="20" height="18" viewBox="0 0 20 18"><path d="M1 6h3l4-4v14l-4-4H1zM11 6c2 2 2 4 0 6" fill="none" stroke="#fff"/><path d="M13 4c3 3 3 7 0 10M16 2c4 4 4 10 0 14" fill="none" stroke="#8a93a5"/></svg></button>
    <button class="lang">ENG</button>
    <button aria-label="通知"><svg width="20" height="22" viewBox="0 0 20 22"><path d="M1 2h18v15h-6l-3 3-3-3H1z" fill="none" stroke="#fff"/></svg></button>
    <i></i>
  </div>
</footer>
</body>
</html>
```
FILE: styles.css
```css
* { box-sizing: border-box; }
body { margin: 0; min-height: 100vh; display: flex; flex-direction: column; font: 15px/20px "Noto Sans", "Noto Sans CJK SC", sans-serif; color: #d3d7de; background: #1f2631; overflow: hidden; }
button, input, select { font: inherit; color: inherit; background: none; border: 0; padding: 0; margin: 0; }
button { white-space: nowrap; }
svg { display: block; flex: none; }
p, h1 { margin: 0; font: inherit; }
select { appearance: none; min-width: 0; }
.defs { position: absolute; width: 0; height: 0; }
.caret { flex: none; width: 0; height: 0; border: 4px solid transparent; border-top-color: #d3d8e0; border-bottom: 0; }
.caret.wide { border-width: 5px; border-bottom: 0; }
.caret.dim { border-top-color: #69707c; }
.desktop { flex: 1; display: grid; grid-template-columns: minmax(0, 1fr) 296px; }

/* CAD window */
.cad { display: flex; flex-direction: column; border: solid #1d88ad; border-width: 1px 2px 1px 1px; background: #222832; }
.titlebar { display: flex; align-items: center; height: 33px; padding: 0 10px 0 8px; }
.ico { display: grid; place-items: center; }
.logo { margin-right: 5px; }
.quick { display: flex; align-items: center; gap: 8px; padding: 0 4px 0 20px; }
.workspace { display: flex; align-items: center; width: 223px; height: 26px; padding: 0 3px; gap: 3px; background: #333a47; color: #989da7; }
.workspace select { flex: 1; }
.caret.bar { margin-left: 5px; position: relative; }
.caret.bar::before { content: ""; position: absolute; left: -5px; top: -9px; width: 10px; height: 2px; background: #d3d8e0; }
.share { display: flex; align-items: center; gap: 5px; margin-left: 10px; color: #73b7ec; }
.titlebar h1 { margin-left: 66px; width: 169px; color: #e6e8eb; }
.play { border: 5px solid transparent; border-left-color: #e0e3e8; border-right: 0; }
.search { width: 223px; height: 26px; margin: 0 4px 0 8px; padding: 0 4px; background: #434c5a; }
.search::placeholder { color: #a0a6b0; font-style: italic; opacity: 1; }
.login { display: flex; align-items: center; gap: 6px; margin-left: 10px; color: #e6e8eb; }
.apps { display: flex; align-items: center; gap: 8px; margin-left: auto; padding-right: 86px; }
.apps .first { margin-right: 6px; }
.rule { width: 1px; height: 22px; background: #444b57; }
.winbtns { display: flex; gap: 16px; }
.menubar { display: flex; align-items: center; gap: 28px; height: 26px; padding: 0 7px 0 18px; color: #b3b8c1; border-bottom: 1px solid #3c424f; }
.docbtns { display: flex; gap: 9px; margin-left: auto; }
.ribtabs { display: flex; align-items: stretch; height: 30px; padding: 5px 0 0 6px; color: #aab0ba; }
.ribtabs button { padding: 0 12px 2px; }
.ribtabs .on { background: #3d4353; color: #e6e9ee; }
.ribtabs .collapse { display: flex; align-items: center; gap: 5px; padding-left: 30px; }
.ribbon { display: flex; height: 124px; margin: 0 2px 0 4px; background: #3d4353; border-bottom: 1px solid #4a505e; color: #e2e5ea; }
.panel { display: flex; flex-direction: column; flex: none; border-right: 2px solid #272d3a; }
.body { display: flex; height: 100px; padding-top: 5px; }
.title { flex: 1; display: flex; align-items: center; justify-content: center; gap: 9px; position: relative; }
.big { width: 50px; padding-top: 2px; display: flex; flex-direction: column; align-items: center; justify-content: flex-start; }
.big svg { margin-bottom: 3px; }
.big .caret { margin-top: 3px; }
.big.two { display: block; }
.big.two svg { margin: 0 auto 1px; }
.sm { display: flex; align-items: center; height: 31px; }
.sm .caret { margin-left: 8px; }
.p-draw { width: 264px; }
.p-draw .body { padding-left: 2px; }
.big.arc { width: 54px; }
.p-draw .col { margin-left: 7px; }
.p-modify { width: 166px; }
.p-modify .body { display: grid; grid-template-columns: 38px 36px 51px 22px; align-content: start; padding-left: 6px; }
.p-note { width: 158px; }
.p-note .body { padding-left: 5px; }
.p-note .big { width: 53px; }
.p-layer { width: 315px; }
.p-layer .body { padding-left: 1px; }
.stack { width: 260px; padding: 2px 0 0 2px; }
.combo { display: flex; align-items: center; gap: 2px; height: 27px; padding: 0 1px; background: #4a5368; border: 1px solid #2c323e; color: #eef0f4; }
.combo select { flex: 1; }
.swatch { width: 17px; height: 17px; margin: 0 5px; background: #fff; border: 1px solid #111; }
.tools { display: grid; grid-template-columns: repeat(5, 30px); padding: 3px 0 0 2px; }
.p-block { width: 100px; }
.p-block .big { width: 53px; }
.p-block .col { margin-left: 1px; }
.p-prop { width: 251px; }
.p-prop .col { margin-left: 2px; }
.p-prop .stack { width: 174px; padding: 2px 0 0 3px; }
.tri { display: flex; flex-direction: column; gap: 3px; }
.swatch.plain { width: 20px; height: 20px; margin: 0 11px 0 8px; border: 0; }
.line { width: 80px; height: 1px; background: #fff; }
.p-prop .combo { padding: 0 2px 0 4px; }
.launch { position: absolute; right: 6px; top: 8px; }
.p-group { width: 84px; }
.p-group .col { margin-left: 2px; }
.p-group .sm { width: 29px; justify-content: center; }
.sm.pressed { background: #3f6785; border: 1px solid #7ebcf0; height: 29px; }
.slab { display: flex; flex-direction: column; align-items: center; justify-content: flex-start; flex: none; width: 76px; margin-top: 1px; padding: 6px 0 5px; background: #4a5368; border: 1px solid #272d3a; border-width: 0 1px 2px; }
.slab svg { margin-bottom: 1px; }
.slab .caret { margin-top: auto; }
.doctabs { display: flex; align-items: flex-end; height: 38px; padding-left: 21px; border-bottom: 6px solid #393f4a; }
.dt { width: 162px; height: 29px; padding: 0 22px; text-align: left; color: #a9aeb8; background: #2d333f; clip-path: polygon(14px 0, 148px 0, 100% 100%, 0 100%); }
.dt.on { display: flex; align-items: center; justify-content: space-between; width: 160px; margin-left: -8px; padding-right: 14px; background: #3d4353; color: #fff; font-weight: bold; }
.add { display: grid; place-items: center; width: 26px; height: 26px; margin: 0 0 1px 12px; border-radius: 6px; background: #2b313c; }
.canvas { position: relative; flex: 1; margin: 0 3px; background: #212631; overflow: hidden; }
.model { position: absolute; inset: 0; width: 100%; height: 100%; }
.cross-h { position: absolute; left: 0; right: 0; top: 211px; height: 1px; background: #e9ebee; }
.cross-v { position: absolute; left: 395px; top: 0; bottom: 78px; width: 1px; background: #e9ebee; }
.vplabel { position: absolute; left: 4px; top: 4px; }
.cube { position: absolute; right: 7px; top: 15px; }
.cube .top { font-family: "Noto Serif CJK SC", "Noto Sans CJK SC", serif; fill: #40434a; }
.cube .wcs { fill: #55585f; }
.navbar { position: absolute; right: 2px; top: 226px; }
.ucs { position: absolute; left: 0; bottom: 0; }
.mark { fill: #656973; font-family: "Noto Sans CJK SC", sans-serif; font-weight: 500; }
.axis { fill: #e6e9ee; font: 300 22px "Open Sans", sans-serif; }
.cmd { position: absolute; left: 323px; right: 323px; bottom: 2px; display: flex; color: #111; font: 15px/18px "DejaVu Sans Mono", "Noto Sans CJK SC", monospace; }
.grip { display: flex; flex-direction: column; align-items: center; justify-content: space-between; width: 31px; padding: 6px 3px 9px 0; background: #282d38; }
.cmdbox { flex: 1; border-radius: 2px; overflow: hidden; }
.hist { height: 51px; padding: 13px 4px 1px; background: #c8c8c8; border-bottom: 1px solid #333; }
.prompt { display: flex; align-items: center; gap: 3px; height: 24px; padding: 1px 5px 0 4px; background: #fff; }
.prompt .caret { border-top-color: #666; }
.prompt label { margin-left: 4px; }
.prompt input { flex: 1; }
.prompt .up { border: 5px solid transparent; border-bottom-color: #666; border-top: 0; }
.status { display: flex; justify-content: space-between; height: 39px; margin: 0 3px; border-top: 1px solid #414754; }
.layouts { display: flex; padding-left: 12px; gap: 1px; height: 23px; }
.layouts button { width: 67px; padding-bottom: 3px; color: #aeb3bd; background: #2a303c; clip-path: polygon(0 0, 100% 0, 60px 100%, 7px 100%); }
.layouts .on { width: 63px; background: #3a4050; color: #fff; font-weight: bold; }
.layouts .plus { width: 28px; display: grid; place-items: center; clip-path: none; border-radius: 4px; }
.toggles { display: flex; gap: 2px; height: 31px; color: #b9bfca; }
.coords { width: 226px; background: #3b4150; font-size: 14px; }
.set { display: flex; align-items: center; justify-content: space-between; width: 81px; padding: 0 5px; background: #3b4150; }
.set.one { width: 30px; }
.set.pad { width: 80px; }
.set.one.last { margin-left: 6px; width: 31px; }
.set.one.last svg { margin-left: -1px; }
.set .lit { display: grid; place-items: center; width: 28px; height: 28px; background: #6795c6; }

/* Spreadsheet window */
.sheet { overflow: hidden; background: #f4f4f5; color: #222; border-top: 2px solid #27306a; }
.booktabs { display: flex; height: 48px; padding-top: 12px; background: linear-gradient(#eff0fb 12px, #f4f4f6 12px); }
.home { width: 47px; display: flex; align-items: center; justify-content: flex-end; padding-right: 28px; background: #5f8ff8; color: #fff; border-radius: 0 4px 0 0; }
.book { display: flex; align-items: center; gap: 6px; margin-left: 4px; padding: 0 10px; color: #3c9d49; border: 1px solid #d9daf2; border-width: 1px 0 0 1px; font-size: 15px; }
.wpsbar { display: flex; align-items: center; height: 47px; padding: 0 0 0 2px; border-bottom: 1px solid #dcdcdc; gap: 11px; }
.wpsbar i { width: 1px; height: 28px; background: #d9d9d9; }
.wpsbar .more { margin: 0 0 0 4px; }
.wpsbar .on { margin-left: -3px; padding: 3px 2px; background: #4da554; color: #fff; font-weight: bold; }
.wpsbar .tight { margin-left: -9px; }
.wpsbar .edge { padding-left: 2px; border-left: 1px solid #bbb; }
.formula { display: flex; align-items: center; height: 53px; padding-top: 5px; background: #e7e7e7; }
.namebox { display: flex; align-items: center; width: 152px; height: 28px; background: #fff; border: 1px solid #d3d3d3; border-left: 0; border-radius: 0 4px 4px 0; margin-right: 54px; padding-right: 2px; }
.namebox input { width: 142px; padding-right: 36px; text-align: center; font-family: "Liberation Mono", monospace; }
.namebox .caret { border-top-color: #777; }
.fx { width: 20px; margin: 0 9px; font: italic 22px "Liberation Serif", serif; color: #444; }
.fin { flex: 1; min-width: 0; height: 28px; background: #fff; border: 1px solid #d3d3d3; border-radius: 4px 0 0 4px; }
table { width: 100%; border-collapse: separate; border-spacing: 0; table-layout: fixed; background: #fff; color: #111; font-size: 18px; }
td, th { height: 55px; padding: 0; line-height: 26px; border-bottom: 1px solid #111; text-align: left; white-space: nowrap; }
td:first-child, th:first-child { width: 58px; text-align: center; border-right: 1px solid #111; }
td + td { padding-left: 3px; }
td:first-child { border-bottom-color: #ccc; }
.cols th { height: 28px; background: #e7e7e7; border-bottom-color: #bbb; }
.cols th:first-child { background: #d5d5d5; color: #3f9b49; border-right-color: #ccc; border-bottom: 2px solid #4aa551; font: 18px/20px "Noto Sans", sans-serif; }
.gap td { height: 13px; line-height: 10px; border-bottom-color: #111; }
.gap td:first-child { border-right-color: #ccc; border-bottom-color: #111; }
.head td { background: #464a80; color: #fff; font-size: 20px; border-color: #111; }
.head td:first-child { background: #6b447d; font-size: 18px; }
td.sel { border: 3px solid #4aa551; border-left: 0; }
.band { height: 9px; background: #40445a; }
.sheettabs { display: flex; height: 27px; background: #e9e9e9; }
.sheettabs button { width: 32px; display: grid; place-items: center; }
.sheettabs .st { width: 112px; margin-left: 9px; background: #d1d1d1; color: #555; }
.sheettabs .st.on { flex: 1; margin: 0; background: #fff; color: #3fa24a; font-weight: bold; }

/* Taskbar */
.taskbar { position: relative; display: flex; height: 50px; background: linear-gradient(90deg, #263940, #22373f 35%, #1e2d40 65%, #1b2440); }
.tafe { position: absolute; left: 11px; top: 0; display: flex; align-items: center; gap: 8px; color: #fff; font: bold 36px/40px "Noto Sans", sans-serif; opacity: .35; pointer-events: none; }
.start { display: grid; place-items: center; width: 60px; margin-right: 3px; }
.task { display: grid; place-items: center; width: 62px; background: linear-gradient(#7bb4e6, #7bb4e6) center bottom / 51px 3px no-repeat; }
.task.active { background: linear-gradient(#7bb4e6, #7bb4e6) center bottom / 62px 3px no-repeat, #4c5e66; }
.tray { display: flex; align-items: center; gap: 13px; margin-left: auto; padding-right: 4px; color: #fff; }
.tray .lang { margin-right: 9px; }
.tray i { width: 1px; height: 50px; margin-left: 13px; background: #5a6376; }
```
